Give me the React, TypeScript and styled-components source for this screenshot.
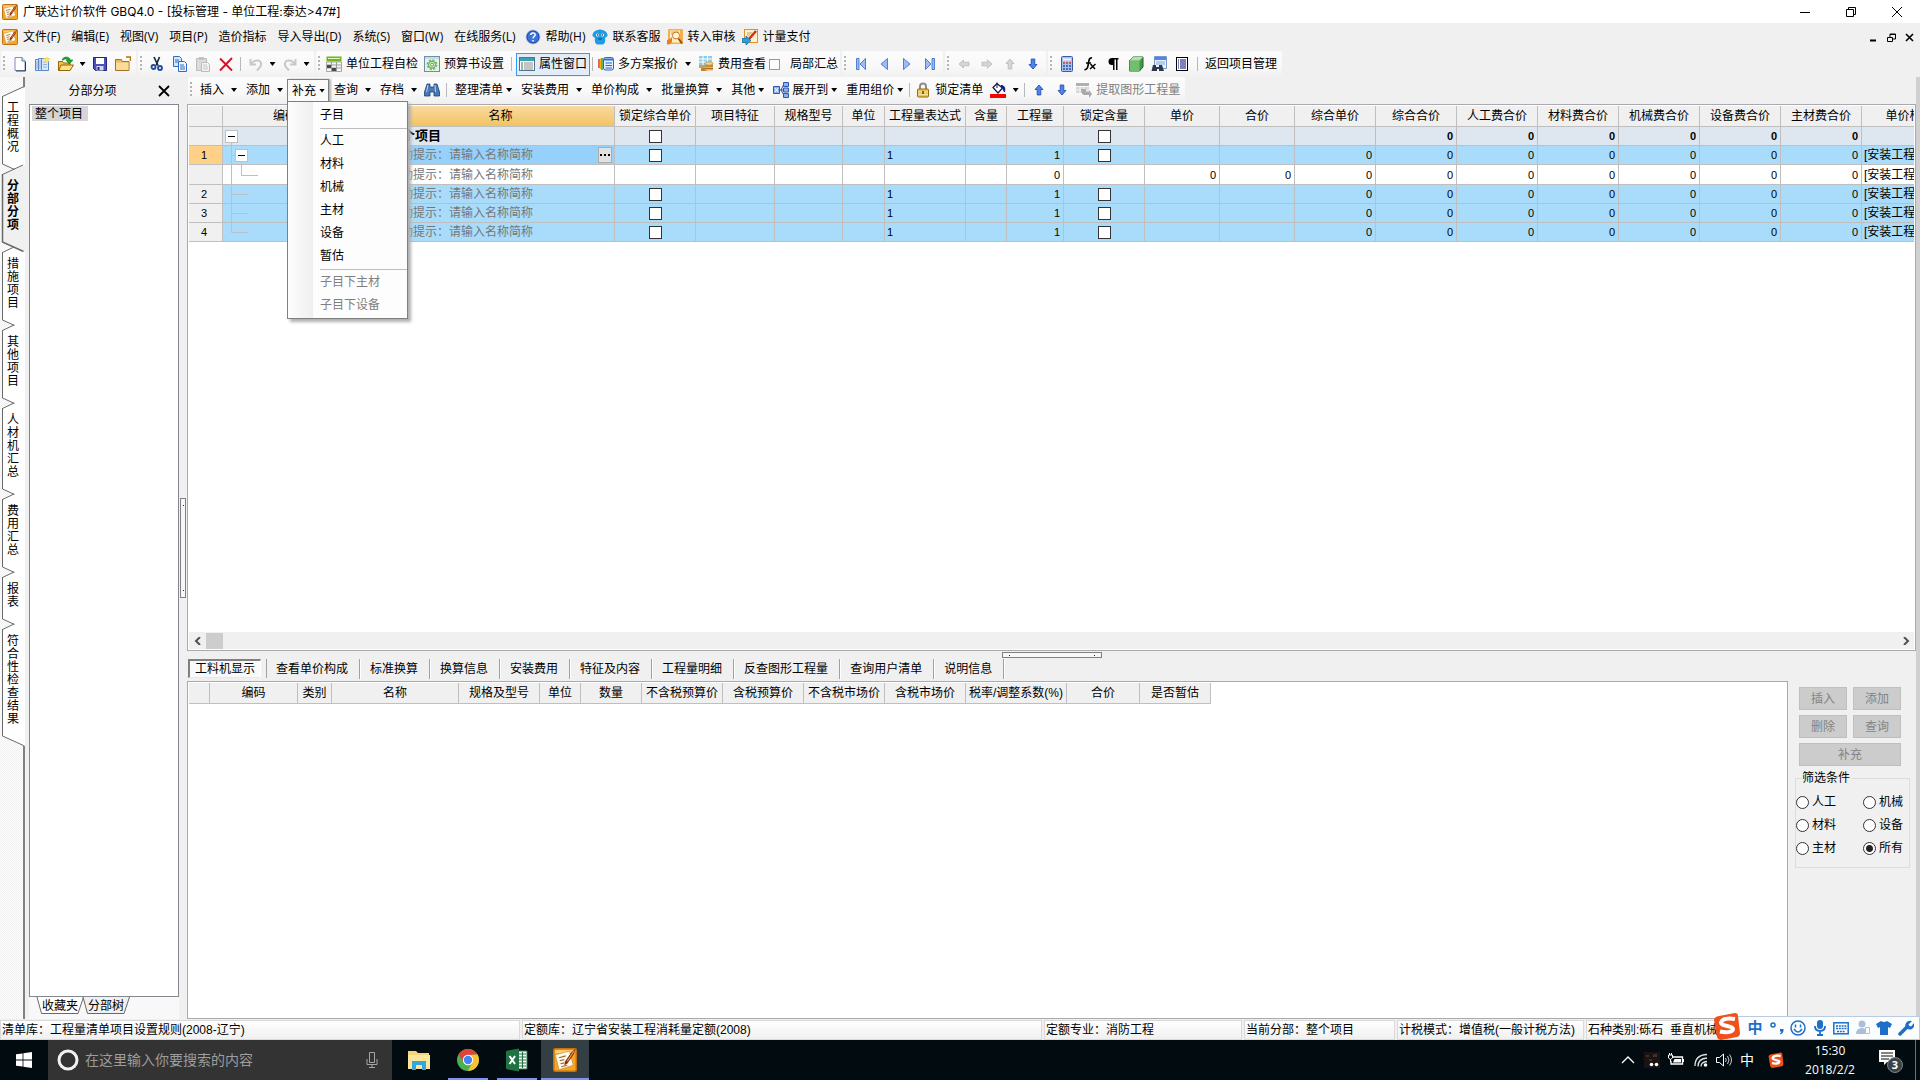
import React from "react";
import styled, { createGlobalStyle, css } from "styled-components";

const UI_FONT = '"Open Sans", "Noto Sans CJK SC", sans-serif';
const GRID_FONT = '"Liberation Sans", "Noto Sans CJK SC", sans-serif';

const GlobalStyle = createGlobalStyle`
  * { box-sizing: border-box; }
  html, body { margin: 0; padding: 0; overflow: hidden; }
  body { font: 12px/16px ${UI_FONT}; color: #000; background: #f0f0f0; }
  button, input { font: inherit; color: inherit; margin: 0; padding: 0; border: 0; background: none; }
  button { white-space: nowrap; }
  svg { display: block; flex: none; }
`;

/* ---------- frame ---------- */

const Window = styled.div`
  display: flex;
  flex-direction: column;
  height: 100vh;
  background: #f0f0f0;
`;

const TitleBar = styled.header`
  display: flex;
  align-items: center;
  height: 23px;
  padding-left: 2px;
  background: #fff;
`;

const Title = styled.h1`
  flex: 1;
  margin: 0 0 0 5px;
  font-family: Inter, "Noto Sans CJK SC", sans-serif;
  font-size: 12px;
  font-weight: 400;
`;

const CaptionButton = styled.button<{ $small?: boolean }>`
  display: flex;
  align-items: center;
  justify-content: center;
  width: ${(p) => (p.$small ? 18 : 46)}px;
  height: 22px;
`;

const MenuBar = styled.nav`
  display: flex;
  align-items: center;
  height: 28px;
  padding: 0 2px;
`;

const MenuItem = styled.button<{ $icon?: boolean }>`
  display: flex;
  align-items: center;
  gap: 5px;
  height: 22px;
  padding: 0 ${(p) => (p.$icon ? "3px" : "6px 0 5px")};
`;

const Spacer = styled.div`
  flex: 1;
`;

const ToolbarRow = styled.div<{ $inner?: boolean }>`
  display: flex;
  flex: none;
  gap: 2px;
  height: ${(p) => (p.$inner ? 27 : 26)}px;
  padding-left: 1px;
`;

const ToolbarSection = styled.div`
  display: flex;
  align-items: center;
  height: 26px;
  padding: 0 2px 0 7px;
  border-radius: 2px;
  background:
    linear-gradient(#b4b4b4, #b4b4b4) 2px 5px / 2px 2px no-repeat,
    linear-gradient(#b4b4b4, #b4b4b4) 2px 9px / 2px 2px no-repeat,
    linear-gradient(#b4b4b4, #b4b4b4) 2px 13px / 2px 2px no-repeat,
    linear-gradient(#b4b4b4, #b4b4b4) 2px 17px / 2px 2px no-repeat,
    linear-gradient(#fcfcfc, #f8f8f8 60%, #f0f0f0);
`;

const IconButton = styled.button<{ $w?: number }>`
  display: flex;
  align-items: center;
  justify-content: center;
  width: ${(p) => p.$w ?? 23}px;
  height: 23px;
`;

const TextButton = styled.button<{ $active?: boolean; $muted?: boolean }>`
  display: flex;
  align-items: center;
  gap: 4px;
  height: 23px;
  padding: 0 2px;
  border: 1px solid ${(p) => (p.$active ? "#3399ff" : "transparent")};
  background: ${(p) => (p.$active ? "#e2edf9" : "none")};
  color: ${(p) => (p.$muted ? "#808080" : "#000")};
`;

const SplitButton = styled.button<{ $tight?: boolean; $open?: boolean }>`
  display: flex;
  align-items: center;
  gap: ${(p) => (p.$tight ? 3 : 7)}px;
  height: 23px;
  padding: 0 4px 0 5px;
  ${(p) =>
    p.$open &&
    css`
      padding: 0 3px 0 4px;
      border: 1px solid #808080;
      border-bottom: 0;
      background: #fafafa;
      box-shadow: 2px 0 2px #b0b0b0;
    `}
`;

const Caret = styled.i`
  width: 6px;
  height: 4px;
  background: currentColor;
  clip-path: polygon(0 0, 100% 0, 50% 100%);
`;

const Separator = styled.i<{ $gap?: number }>`
  width: 1px;
  height: 14px;
  margin: 0 ${(p) => p.$gap ?? 3}px;
  background: #b8b8b8;
`;

const CheckLabel = styled.label`
  display: flex;
  align-items: center;
  gap: 10px;
`;

const ToolCheck = styled.input`
  appearance: none;
  width: 11px;
  height: 11px;
  border: 1px solid #9a9a9a;
  background: #fdfdfd;
`;

/* ---------- body ---------- */

const Body = styled.div`
  display: flex;
  flex: 1;
  min-height: 0;
  border-right: 4px solid #d0d0d0;
`;

const PageTabs = styled.nav`
  display: flex;
  flex: none;
  flex-direction: column;
  width: 25px;
  padding-top: 19px;
  border-right: 2px solid #808080;
  background: repeating-conic-gradient(#f2f2f2 0 25%, #fcfcfc 0 50%) 0 0 / 2px 2px;
`;

const PageTab = styled.button<{ $active?: boolean }>`
  display: grid;
  width: 25px;
  font-family: ${GRID_FONT};
  font-weight: ${(p) => (p.$active ? 700 : 400)};
  z-index: ${(p) => (p.$active ? 1 : 0)};
  > * { grid-area: 1 / 1; }
`;

const PageTabText = styled.span`
  width: 13px;
  margin: 6px 0 20px 7px;
  line-height: 13px;
  white-space: normal;
  word-break: break-all;
  text-align: left;
`;

const TreePane = styled.aside`
  display: flex;
  flex: none;
  flex-direction: column;
  width: 154px;
  padding-left: 4px;
`;

const PaneHead = styled.div`
  display: flex;
  align-items: center;
  height: 27px;
  padding-right: 7px;
`;

const PaneTitle = styled.h2`
  flex: 1;
  margin: 0;
  text-align: center;
  font-size: 12px;
  font-weight: 400;
`;

const TreeBox = styled.div`
  flex: 1;
  padding: 1px 2px;
  border: 1px solid #828790;
  background: #fff;
`;

const TreeItem = styled.button`
  height: 15px;
  padding: 0 5px 0 3px;
  line-height: 15px;
  background: #d6d6d6;
`;

const TreeTabs = styled.div`
  display: flex;
  height: 22px;
  padding-left: 8px;
  background: #f8f8f8;
`;

const TreeTab = styled.button`
  display: grid;
  width: 46px;
  height: 18px;
  line-height: 18px;
  font-family: ${GRID_FONT};
  > * { grid-area: 1 / 1; }
`;

const Splitter = styled.div<{ $row?: boolean }>`
  display: flex;
  flex: none;
  align-items: center;
  justify-content: center;
  width: ${(p) => (p.$row ? "auto" : "8px")};
  height: ${(p) => (p.$row ? "8px" : "auto")};
`;

const SplitHandle = styled.i<{ $row?: boolean }>`
  width: ${(p) => (p.$row ? 100 : 6)}px;
  height: ${(p) => (p.$row ? 6 : 100)}px;
  border: 1px solid #808080;
  background:
    linear-gradient(#1a1a8c, #1a1a8c) ${(p) => (p.$row ? "6px 2px" : "2px 6px")} / 1px 1px no-repeat,
    linear-gradient(#1a1a8c, #1a1a8c) ${(p) => (p.$row ? "91px 2px" : "2px 91px")} / 1px 1px no-repeat,
    #f7f7f7;
`;

const MainPane = styled.main`
  display: flex;
  flex: 1;
  flex-direction: column;
  min-width: 0;
`;

const GridBox = styled.section`
  display: flex;
  flex: 1;
  flex-direction: column;
  min-height: 0;
  padding: 1px;
  border: 1px solid #a9a9af;
  background: #fff;
`;

const GridScroll = styled.div`
  flex: 1;
  overflow: hidden;
`;

const Table = styled.table<{ $width: number }>`
  width: ${(p) => p.$width}px;
  border-collapse: separate;
  border-spacing: 0;
  table-layout: fixed;
  font-family: ${GRID_FONT};
`;

const HeadCell = styled.th<{ $hot?: boolean }>`
  height: 21px;
  padding: 0;
  border: solid #bfbfbf;
  border-width: 0 1px 1px 0;
  font-weight: 400;
  line-height: 16px;
  overflow: hidden;
  white-space: nowrap;
  background: ${(p) => (p.$hot ? "linear-gradient(#fad9a3, #f2c45f)" : "#f0f0f0")};
`;

const rowTint = { sum: "#dee6f0", item: "#a9dcfb", plain: "#fff" };
type Tint = keyof typeof rowTint;

const Row = styled.tr<{ $tint: Tint }>`
  height: ${(p) => (p.$tint === "plain" ? 20 : 19)}px;
  background: ${(p) => rowTint[p.$tint]};
  font-weight: ${(p) => (p.$tint === "sum" ? 700 : 400)};
`;

const Cell = styled.td<{ $align?: string; $bg?: string; $hint?: boolean }>`
  padding: 0 2px;
  border: solid #bfbfbf;
  border-width: 0 1px 1px 0;
  line-height: 16px;
  text-align: ${(p) => p.$align ?? "left"};
  background: ${(p) => p.$bg ?? "none"};
  color: ${(p) => (p.$hint ? "#777" : "#000")};
  overflow: hidden;
  white-space: nowrap;
`;

const NumberCell = styled(Cell)`
  padding-right: 3px;
  font-size: 11px;
`;

const RowNumber = styled.th<{ $current?: boolean }>`
  padding: 0 3px 0 0;
  border: solid #bfbfbf;
  border-width: 0 1px 1px 0;
  font-size: 11px;
  font-weight: 400;
  line-height: 16px;
  background: ${(p) => (p.$current ? "#ffd187" : "#f0f0f0")};
`;

const GridCheck = styled.input`
  display: block;
  appearance: none;
  width: 13px;
  height: 13px;
  margin: 0 auto;
  border: 1px solid #333;
  background: #fff;
`;

const NameLine = styled.div`
  display: flex;
  align-items: center;
  justify-content: space-between;
`;

const RootName = styled.span`
  font-size: 13px;
`;

const EllipsisButton = styled.button`
  display: flex;
  align-items: center;
  justify-content: center;
  width: 14px;
  height: 16px;
  border: 1px solid #adadad;
  background: #e1e1e1;
`;

const TreeCell = styled.td`
  padding: 0 0 0 2px;
  border: solid #bfbfbf;
  border-width: 0 1px 1px 0;
`;

const TreeLine = styled.div`
  display: flex;
  align-items: center;
  height: 18px;
`;

const Toggle = styled.button`
  display: flex;
  align-items: center;
  justify-content: center;
  width: 13px;
  height: 13px;
  border: 1px solid #bfbfbf;
  background: #fff;
`;

const ScrollBar = styled.div`
  display: flex;
  align-items: center;
  height: 17px;
  background: #f0f0f0;
`;

const ScrollArrow = styled.button`
  display: flex;
  align-items: center;
  justify-content: center;
  width: 17px;
  height: 17px;
`;

const ScrollThumb = styled.i`
  width: 17px;
  height: 16px;
  background: #cdcdcd;
`;

const DetailTabs = styled.div`
  display: flex;
  flex: none;
  height: 22px;
  padding-left: 1px;
  font-family: ${GRID_FONT};
`;

const DetailTab = styled.button<{ $active?: boolean }>`
  height: 20px;
  padding: 0 11px 0 10px;
  border-right: 1px solid #a0a0a0;
  box-shadow: 1px 0 #fff;
  ${(p) =>
    p.$active &&
    css`
      height: 19px;
      margin-right: 5px;
      padding: 0 5px;
      border: 1px solid #808080;
      border-width: 2px 1px 1px 2px;
      border-right-color: #fff;
      border-bottom-color: #e8e8e8;
      background: #f9f9f9;
      box-shadow: 5px 0 #f0f0f0, 6px 0 #a0a0a0;
    `}
`;

const Lower = styled.section`
  display: flex;
  flex: none;
  height: 338px;
`;

const LowerGrid = styled.div`
  flex: 1;
  padding: 1px;
  border: 1px solid #a9a9af;
  background: #fff;
`;

const ActionPane = styled.div`
  display: flex;
  flex: none;
  flex-direction: column;
  width: 128px;
  padding: 6px 6px 0 7px;
  font-family: ${GRID_FONT};
`;

const ActionGrid = styled.div`
  display: grid;
  grid-template-columns: 48px 48px;
  gap: 5px 6px;
  margin-left: 4px;
`;

const ActionButton = styled.button<{ $wide?: boolean }>`
  grid-column: ${(p) => (p.$wide ? "span 2" : "auto")};
  height: 23px;
  border: 1px solid #bfbfbf;
  background: #ccc;
  color: #838383;
`;

const FilterBox = styled.fieldset`
  display: grid;
  grid-template-columns: 67px 1fr;
  row-gap: 7px;
  min-width: 0;
  margin: 5px 0 0;
  padding: 9px 0 11px;
  border: 1px solid #dcdcdc;
`;

const FilterLegend = styled.legend`
  margin-left: 5px;
  padding: 0 1px;
  line-height: 14px;
`;

const RadioLabel = styled.label`
  display: flex;
  align-items: center;
  gap: 3px;
`;

const Radio = styled.input`
  appearance: none;
  width: 13px;
  height: 13px;
  border: 1px solid #333;
  border-radius: 50%;
  background: #fff;
  &:checked { background: radial-gradient(circle, #222 3px, #fff 4px); }
`;

/* ---------- drop-down ---------- */

const MenuAnchor = styled.div`
  position: relative;
`;

const Popup = styled.div`
  position: absolute;
  z-index: 5;
  top: 22px;
  left: 0;
  display: flex;
  flex-direction: column;
  width: 121px;
  padding: 2px 0 1px;
  border: 1px solid #808080;
  background: linear-gradient(90deg, #fdfdfd, #efefef 25px, #fdfdfd 25px);
  box-shadow: 3px 3px 3px #b0b0b0;
`;

const PopupItem = styled.button<{ $muted?: boolean }>`
  height: 23px;
  padding-left: 32px;
  text-align: left;
  color: ${(p) => (p.$muted ? "#808080" : "#000")};
`;

const PopupRule = styled.hr`
  width: 87px;
  height: 1px;
  margin: 1px 0 1px auto;
  border: 0;
  background: #bdbdbd;
`;

/* ---------- status bar and taskbar ---------- */

const StatusBar = styled.footer`
  position: relative;
  display: flex;
  gap: 2px;
  height: 21px;
  padding-top: 1px;
  font-family: ${GRID_FONT};
`;

const StatusPart = styled.div<{ $size: number }>`
  flex: ${(p) => `${p.$size} ${p.$size} ${p.$size}px`};
  min-width: 0;
  padding-left: 1px;
  border: 1px solid #d9d9d9;
  background: linear-gradient(#fff, #f0f0f0);
  line-height: 18px;
  overflow: hidden;
  white-space: pre;
`;

const ImeBar = styled.div`
  position: absolute;
  right: 0;
  bottom: 0;
  display: flex;
  align-items: center;
  justify-content: space-between;
  width: 193px;
  height: 24px;
  padding: 0 4px 0 18px;
  border: 1px solid #b9cbe0;
  background: #fbfdff;
  color: #1e6fc8;
`;

const ImeLogo = styled.div`
  position: absolute;
  left: -15px;
  bottom: -1px;
`;

const ImeButton = styled.button`
  display: flex;
  align-items: center;
  justify-content: center;
  width: 18px;
  height: 22px;
  font-size: 15px;
  font-weight: 700;
`;

const TaskBar = styled.div`
  display: flex;
  flex: none;
  height: 40px;
  background: #010b10;
  color: #fff;
`;

const StartButton = styled.button`
  display: flex;
  align-items: center;
  justify-content: center;
  width: 48px;
`;

const SearchBox = styled.label`
  display: flex;
  align-items: center;
  gap: 6px;
  width: 344px;
  margin-right: 2px;
  padding: 0 12px 0 9px;
  background: #333;
`;

const SearchInput = styled.input`
  flex: 1;
  min-width: 0;
  font-size: 14px;
  line-height: 20px;
  &::placeholder { color: #9d9d9d; opacity: 1; }
`;

const TaskButton = styled.button<{ $running?: boolean; $active?: boolean }>`
  display: flex;
  align-items: center;
  justify-content: center;
  width: ${(p) => (p.$active ? 48 : 49)}px;
  background:
    linear-gradient(#8192f2, #8192f2) center bottom / ${(p) => (p.$active ? "100%" : "40px")} ${(p) => (p.$running ? "2px" : "0")} no-repeat,
    ${(p) => (p.$active ? "#343f43" : "transparent")};
`;

const TrayButton = styled.button<{ $w: number }>`
  display: flex;
  align-items: center;
  justify-content: center;
  width: ${(p) => p.$w}px;
  font-size: 14px;
`;

const Clock = styled.time`
  display: flex;
  flex-direction: column;
  justify-content: center;
  width: 74px;
  text-align: center;
  line-height: 19px;
`;

const ShowDesktop = styled.button`
  width: 5px;
  border-left: 1px solid #6a7073;
`;

/* ---------- icons ---------- */

const I = ({ children, size = 16, box = 16 }: { children: React.ReactNode; size?: number; box?: number }) => (
  <svg width={size} height={size} viewBox={`0 0 ${box} ${box}`} aria-hidden="true">{children}</svg>
);

const AppIcon = ({ size = 16 }: { size?: number }) => (
  <I size={size}>
    <rect x="0.5" y="0.5" width="15" height="15" rx="1" fill="#f6a623" stroke="#c4700c" />
    <path d="M1.500 1.500h13v2h-13z" fill="#ffd37a" />
    <path d="M1.500 4.500 11 2l2.500 9.500L4 14.500z" fill="#fffaf0" stroke="#c98d35" strokeWidth=".5" />
    <path d="M4 6.500 8.500 5.300M4.500 8.500 7.500 7.800M5 10.500l2.500-.6M5.500 12.500l4-1" stroke="#9a6a2c" strokeWidth=".8" />
    <path d="M15 .5 14 4 9.500 10.500 7.500 11.500 8 9 12.500 2.500z" fill="#8a2f0a" />
    <path d="M14 2 9.500 8.800" stroke="#f0a050" strokeWidth=".7" />
  </I>
);
const NewIcon = () => (
  <I><path d="M3 1.500h7L13 5v9.500H3z" fill="#fff" stroke="#7b8fb4" /><path d="M10 1.500V5h3" fill="#dfe8f8" stroke="#5b6f92" /><path d="M13.500 5.500V15H4" stroke="#2c3d5c" fill="none" /></I>
);
const BooksIcon = () => (
  <I><path d="M.5 3.500h3v11h-3zM3.500 2.500h3v12h-3zM6.500 2.500h7v12h-7z" fill="#dbe8fb" stroke="#5b86c9" /><path d="M8 6h4M8 8.500h4M8 11h4M2 5v8M5 4v9" fill="none" stroke="#8fb0e0" /><path d="m12 0 1 2.500 3-.5-2 2 2 2-3-.5-1 2.500-1-2.500-3 .5 2-2-2-2 3 .5z" fill="#ffe45c" /></I>
);
const OpenIcon = () => (
  <I><path d="M.5 5.500h4l1 1.500H12v7.500H.5z" fill="#f4c244" stroke="#93650c" /><path d="M3 9h12.500L12 14.500H.8z" fill="#ffe08a" stroke="#93650c" /><path d="M4 4C5.500 0 11 0 12.500 4H15l-3.700 4L8 4h2C9 2.500 6.500 2.500 5.500 4z" fill="#20a52a" stroke="#0b6d14" strokeWidth=".5" /></I>
);
const SaveIcon = () => (
  <I><path d="M1.500 1.500h13v13h-11l-2-2z" fill="#4b4fc4" stroke="#23256f" /><path d="M4 2h8v6H4z" fill="#fff" /><path d="M4.500 10h7v4.500h-7z" fill="#d5d8e8" /><path d="M5.500 11h2v3h-2z" fill="#23256f" /></I>
);
const FolderIcon = () => (
  <I><path d="M.5 3.500h6l1 2h6.500v9H.5z" fill="#e9b95a" stroke="#a0712a" /><path d="M1 6.500h12.500v7.500H1z" fill="#fbdc97" /><path d="M11 1h4.500v4" stroke="#b3740c" fill="none" strokeWidth="1.500" /></I>
);
const CutIcon = () => (
  <I><path d="M5 1 9 9.500M10.500 1 7 9.500" stroke="#1c2a44" strokeWidth="1.700" /><circle cx="4.500" cy="11" r="2" fill="none" stroke="#1f4a98" strokeWidth="1.800" /><circle cx="11" cy="12" r="2" fill="none" stroke="#1f4a98" strokeWidth="1.800" /></I>
);
const CopyIcon = () => (
  <I><path d="M1.500.5h6l2 2v8h-8z" fill="#d7e7fb" stroke="#2e6cc0" /><path d="M6.500 5.500h6l2 2v8h-8z" fill="#eef5fe" stroke="#2e6cc0" /><path d="M3 4h4M3 6h3M8 9h4M8 11h5M8 13h5" stroke="#2e6cc0" /></I>
);
const PasteIcon = () => (
  <I><path d="M1.500 2.500h10v12h-10z" fill="#dcdcdc" stroke="#bcbcbc" /><path d="M4 1h5v3H4z" fill="#c2c2c2" /><path d="M6.500 6.500h6l2 2v7h-8z" fill="#f4f4f4" stroke="#bcbcbc" /><path d="M8 9h4M8 11h5M8 13h5" stroke="#c8c8c8" /></I>
);
const DeleteIcon = () => (
  <I><path d="M2 2.500 14 14.500M14 2 2 14.500" stroke="#d8102c" strokeWidth="1.900" /></I>
);
const UndoIcon = ({ flip }: { flip?: boolean }) => (
  <I><g transform={flip ? "matrix(-1 0 0 1 16 0)" : undefined}><path d="M2.500 3v5.500H8" fill="none" stroke="#c8c8c8" strokeWidth="2" /><path d="M3 8C7 2.500 14 4 13 9c-.4 2.500-2.500 3.500-4 5.500" fill="none" stroke="#c8c8c8" strokeWidth="2" /></g></I>
);
const CheckSheetIcon = () => (
  <I><path d="M.5.5h15v5H.5z" fill="#6fb51c" /><path d="M2 2.500h12" stroke="#e9f7c9" /><path d="M.5 6h15v9.500H.5z" fill="#f6f6f6" stroke="#a8a8a8" /><path d="M1 9h14M1 12h14M5.500 6v9M10.500 6v9" stroke="#9b9b9b" /><path d="M1 9h4v3H1zM6 12h4v3H6z" fill="#4a4a4a" /></I>
);
const GearSheetIcon = () => (
  <I><rect x=".5" y=".5" width="15" height="15" fill="#e6f3e6" stroke="#6c8fa8" /><path d="M1 2h14" stroke="#a9c8dd" /><circle cx="8" cy="8.700" r="4.500" fill="none" stroke="#7cbc72" strokeWidth="2" strokeDasharray="2.200 1.300" /><circle cx="8" cy="8.700" r="3.500" fill="#d4ecd0" stroke="#5aa552" /><circle cx="8" cy="8.700" r="1.500" fill="#fff" stroke="#5aa552" /></I>
);
const PropsIcon = () => (
  <I><rect x=".5" y="1.500" width="15" height="13" fill="#fff" stroke="#50748c" /><path d="M1 2h14v3H1z" fill="#3c9fb4" /><path d="M2 7h2M2 9h2M2 11h2M2 13h2" stroke="#2d7a3e" /><path d="M5 7h9M5 9h9M5 11h9M5 13h9" stroke="#8a8a8a" /></I>
);
const PlansIcon = () => (
  <I><path d="M1 3v9" stroke="#d32f2f" strokeWidth="1.500" /><path d="M2.500 2.500v10.500" stroke="#f4b400" strokeWidth="1.500" /><path d="M4 2v12" stroke="#2e9e3a" strokeWidth="1.500" /><rect x="5.500" y="1.500" width="10" height="12.500" rx="2" fill="#e5effd" stroke="#2a62c8" /><path d="M6 2.500h9v2H6z" fill="#2f6fdc" /><path d="M7.500 7H14M7.500 9.500H14M7.500 12H14" stroke="#2a62c8" /></I>
);
const FeeIcon = () => (
  <I><path d="M1 0h13v9H1z" fill="#8fcbe8" /><path d="M1 3h13M1 6h13M5 0v9M9.500 0v9" stroke="#fff" /><path d="M1 9h6v3H1z" fill="#d69b45" /><path d="M3 12h6v3H3z" fill="#b98236" /><path d="M7 7.500h8v7H7z" fill="#e9b25a" /><path d="M7 10h8M7 12.500h8" stroke="#a46d20" /><ellipse cx="11" cy="7.500" rx="4" ry="1.800" fill="#f8d28a" stroke="#a46d20" strokeWidth=".6" /></I>
);
const NavIcon = ({ flip, bar }: { flip?: boolean; bar?: boolean }) => (
  <I><g transform={flip ? "matrix(-1 0 0 1 16 0)" : undefined} fill="#9dbcf4" stroke="#3565c8" strokeWidth=".8">{bar && <path d="M3.500 2.500H6v11H3.500z" />}<path d={bar ? "M12.500 2.500v11L7 8z" : "M11.500 2.500v11L5 8z"} /></g></I>
);
const ArrowIcon = ({ turn, on }: { turn: number; on?: boolean }) => (
  <I><path transform={`rotate(${turn} 8 8)`} d="M8 3 12 7.500H9.800V13H6.200V7.500H4z" fill={on ? "#4d83ea" : "#d6d6d6"} stroke={on ? "#1d48a8" : "#b8b8b8"} strokeWidth=".8" /></I>
);
const CalcIcon = () => (
  <I><rect x="2.500" y=".5" width="11" height="15" rx="1" fill="#a8c2f0" stroke="#3c5ca0" /><path d="M4 2.500h8v2H4z" fill="#eaf3ff" /><path d="M4 7h2M7 7h2M10 7h2" stroke="#d63a2a" strokeWidth="1.600" /><path d="M4 10h2M7 10h2M10 10h2M4 13h2M7 13h2M10 13h2" stroke="#2c4c98" strokeWidth="1.600" /></I>
);
const FxIcon = () => (
  <I><path d="M10 2C7.500 1.500 7 3.500 6.500 7s-1 7-4 6.500M4 7h5" fill="none" stroke="#000" strokeWidth="1.700" /><path d="M8.500 8 13 13M13.500 8 8 13" stroke="#000" strokeWidth="1.500" /></I>
);
const PilcrowIcon = () => (
  <I><path d="M13.500 2H7a3.500 3.500 0 0 0 0 7h1v5h1.500V3.500H11V14h1.500V3.500h1z" fill="#000" /></I>
);
const CubeIcon = () => (
  <I><path d="M1.500 4.500 5 1h10v10l-3.500 4h-10z" fill="#47974b" stroke="#1e5c25" /><path d="M1.500 4.500h10V15h-10z" fill="#73bd70" /><path d="M1.500 4.500 5 1h10l-3.500 3.500z" fill="#b3e0ac" /></I>
);
const FindSheetIcon = () => (
  <I><path d="M3.500.5h12v12h-12z" fill="#e7f0ff" stroke="#7796c9" /><path d="M4 1h11v3H4z" fill="#4f86e6" /><path d="M5 6h9M5 8h9" stroke="#8aa5d6" /><path d="M2 9h3v2h3V9h3l2 6H8v-2H6v2H.5z" fill="#2d3848" /></I>
);
const ListIcon = () => (
  <I><rect x="2.500" y="1.500" width="11" height="13" fill="#fff" stroke="#000" /><path d="M4 4h1M6 4h6M4 6h1M6 6h6M4 8h1M6 8h6M4 10h1M6 10h6M4 12h1M6 12h6" stroke="#00007c" strokeWidth="1.200" /></I>
);
const BinocularsIcon = () => (
  <I><path d="M3 2h3v3h4V2h3l2.500 8v4H10v-4H6v4H.5v-4z" fill="#4a78b8" stroke="#203f70" strokeWidth=".8" /><path d="M4 3 2.500 10M11 3l.5 7" stroke="#bcd5f5" /></I>
);
const ExpandIcon = () => (
  <I><path d="M5 8h6M8 8l3-6M8 8l3 5.500" stroke="#2b4f8c" fill="none" /><g fill="#8fb2ee" stroke="#2c59b0"><path d="M.5 4.500h6v7h-6zM10.500.5h5v4h-5zM10.500 6h5v4h-5zM10.500 11.500h5v4h-5z" /></g><path d="m2 6 3 4M5 6l-3 4" stroke="#fff" /></I>
);
const LockIcon = () => (
  <I><path d="M5 8V4.500a3 3 0 0 1 6 0V8" fill="none" stroke="#8d8d8d" strokeWidth="2" /><rect x="2.500" y="7" width="11" height="8" rx="1" fill="#eec14a" stroke="#946b14" /><path d="M3 10h10M3 12.500h10" stroke="#fbe6a5" /><path d="M8 9v3" stroke="#5a3f06" strokeWidth="1.500" /></I>
);
const PaintIcon = () => (
  <I><path d="m3 5.500 4-4 5.500 4.500L8 11z" fill="#fff" stroke="#101440" strokeWidth="1.200" /><path d="M7 6V.5" stroke="#101440" /><path d="M11 3.500c3 0 4.500 2 3.500 6.500l-2-4z" fill="#101c8c" stroke="#101c8c" /><path d="M0 12h16v4H0z" fill="#f00" /></I>
);
const ExtractIcon = () => (
  <I><path d="M0 1h13v3H0z" fill="#b0b0b0" /><path d="M0 5h13v6H0z" fill="#d6d6d6" /><path d="M4 5v6M8 5v6M0 8h13" stroke="#f5f5f5" /><path d="M5 7h5v3h3V8l3 4-3 4v-3H8q-3-1-3-6z" fill="#a9a9a9" /></I>
);
const HelpIcon = () => (
  <I><circle cx="8" cy="8" r="7" fill="#3c73d8" stroke="#b9c9e8" /><circle cx="8" cy="8" r="6" fill="none" stroke="#1f4aa6" /><path d="M5.800 6c.2-3 4.600-2.600 4.400 0C10 7.500 8 7.500 8 9.500M8 11v1.600" fill="none" stroke="#fff" strokeWidth="1.500" /></I>
);
const ServiceIcon = () => (
  <I><path d="M3 2q5-3 10 0 3 2 2.500 5L13 9q1 5-2 6.500H5Q2 14 3 9L.5 7Q0 4 3 2z" fill="#1c9be6" /><circle cx="5.500" cy="6" r="1.500" fill="#fff" /><circle cx="10.500" cy="6" r="1.500" fill="#fff" /><circle cx="5.700" cy="6" r=".7" /><circle cx="10.300" cy="6" r=".7" /><path d="M6 9.500q2 1.500 4 0" stroke="#064b7d" fill="none" /></I>
);
const AuditIcon = () => (
  <I><rect x="1" y="0" width="15" height="15" rx="1" fill="#f4b04a" /><path d="M3 1.500h10v12H3z" fill="#ffeec3" /><path d="M4 3h8M4 5h3" stroke="#dba550" /><circle cx="9" cy="6.500" r="3.500" fill="#fff8e6" stroke="#c97516" /><path d="m11.500 9.500 3.500 5" stroke="#a64a08" strokeWidth="2" /><path d="M0 11q3 0 5-3v5q-2 3-5 2.500z" fill="#eb7c1c" /></I>
);
const PayIcon = () => (
  <I><rect x="2.500" y=".5" width="13" height="13" fill="#fff1ce" stroke="#e2921c" /><path d="M5 4h5M5 6h3" stroke="#c99e56" /><path d="m14 2-7 8" stroke="#cf3512" strokeWidth="2.500" /><path d="M0 9.500h4V7l5 4.500L4 16v-2.500H0z" fill="#2b9de0" stroke="#12619a" strokeWidth=".7" /></I>
);
const SogouIcon = ({ size }: { size: number }) => (
  <I size={size} box={28}><path d="M6 4 22 1q3 0 3 3l2 17q0 3-3 4L8 28q-3 0-4-3L1 8q0-3 5-4z" fill="#f0501c" /><path d="M22 7Q10 5 8 10.500c-.5 4 12 3 12 6.500-.5 4-8 3.500-13 2.500" fill="none" stroke="#fff" strokeWidth="4" /></I>
);
const DotsIcon = () => (
  <svg width="10" height="2" aria-hidden="true"><path d="M0 0h2v2H0zM4 0h2v2H4zM8 0h2v2H8z" /></svg>
);

/* ---------- data ---------- */

const menus = ["文件(F)", "编辑(E)", "视图(V)", "项目(P)", "造价指标", "导入导出(D)", "系统(S)", "窗口(W)", "在线服务(L)"];
const iconMenus: [string, React.ReactNode][] = [
  ["帮助(H)", <HelpIcon />],
  ["联系客服", <ServiceIcon />],
  ["转入审核", <AuditIcon />],
  ["计量支付", <PayIcon />],
];
const pageTabs = ["工程概况", "分部分项", "措施项目", "其他项目", "人材机汇总", "费用汇总", "报表", "符合性检查结果"];

const columns: [string, number][] = [
  ["", 34], ["编码", 125], ["类别", 39], ["名称", 228], ["锁定综合单价", 81], ["项目特征", 79], ["规格型号", 68],
  ["单位", 42], ["工程量表达式", 81], ["含量", 41], ["工程量", 57], ["锁定含量", 81], ["单价", 75], ["合价", 75],
  ["综合单价", 81], ["综合合价", 81], ["人工费合价", 81], ["材料费合价", 81], ["机械费合价", 81], ["设备费合价", 81],
  ["主材费合价", 81], ["单价构成", 96],
];
const detailColumns: [string, number][] = [
  ["", 21], ["编码", 88], ["类别", 34], ["名称", 127], ["规格及型号", 81], ["单位", 41], ["数量", 61], ["不含税预算价", 81],
  ["含税预算价", 81], ["不含税市场价", 81], ["含税市场价", 81], ["税率/调整系数(%)", 101], ["合价", 73], ["是否暂估", 71],
];
const detailTabs = ["工料机显示", "查看单价构成", "标准换算", "换算信息", "安装费用", "特征及内容", "工程量明细", "反查图形工程量", "查询用户清单", "说明信息"];
const sum = (cols: [string, number][]) => cols.reduce((n, c) => n + c[1], 0);

type Kind = "root" | "first" | "child" | "mid" | "last";
const rows: { no: string; kind: Kind; tint: Tint }[] = [
  { no: "", kind: "root", tint: "sum" },
  { no: "1", kind: "first", tint: "item" },
  { no: "", kind: "child", tint: "plain" },
  { no: "2", kind: "mid", tint: "item" },
  { no: "3", kind: "mid", tint: "item" },
  { no: "4", kind: "last", tint: "item" },
];
const branch: Record<Kind, string> = {
  root: "",
  first: "M6.500-3V19M6.500 9.500H11",
  child: "M6.500-1V20M16.500-3V9.500H33",
  mid: "M6.500-1V19M6.500 9.500H23",
  last: "M6.500-1V9.500H23",
};

const Minus = () => (
  <svg width="7" height="1"><path d="M0 .5h7" stroke="#000" /></svg>
);

const Cols = ({ cols }: { cols: [string, number][] }) => (
  <colgroup>{cols.map((c, i) => <col key={i} style={{ width: c[1] }} />)}</colgroup>
);

function GridRow({ no, kind, tint }: { no: string; kind: Kind; tint: Tint }) {
  const root = kind === "root";
  const child = kind === "child";
  const check = !child && <GridCheck type="checkbox" aria-label="锁定" />;
  return (
    <Row $tint={tint}>
      <RowNumber scope="row" $current={kind === "first"}>{no}</RowNumber>
      <TreeCell>
        <TreeLine>
          {!root && (
            <svg width={kind === "first" ? 10 : 34} height="18" overflow="visible">
              <path d={branch[kind]} fill="none" stroke="#bfbfbf" />
            </svg>
          )}
          {(root || kind === "first") && <Toggle aria-label="折叠"><Minus /></Toggle>}
        </TreeLine>
      </TreeCell>
      <Cell />
      <Cell $hint={!root} $bg={kind === "first" ? "#95d1fb" : undefined}>
        {root ? <RootName>整个项目</RootName> : (
          <NameLine>
            自动提示：请输入名称简称
            {kind === "first" && <EllipsisButton aria-label="更多"><DotsIcon /></EllipsisButton>}
          </NameLine>
        )}
      </Cell>
      <Cell $align="center">{check}</Cell>
      <Cell /><Cell /><Cell />
      <NumberCell>{!root && !child && "1"}</NumberCell>
      <Cell />
      <NumberCell $align="right">{child ? "0" : !root && "1"}</NumberCell>
      <Cell $align="center">{check}</Cell>
      <NumberCell $align="right">{child && "0"}</NumberCell>
      <NumberCell $align="right">{child && "0"}</NumberCell>
      <NumberCell $align="right">{!root && "0"}</NumberCell>
      {columns.slice(15, 21).map(([name]) => <NumberCell key={name} $align="right">0</NumberCell>)}
      <Cell>{!root && "[安装工程]"}</Cell>
    </Row>
  );
}

function TabShape({ height, first, active }: { height: number; first: boolean; active: boolean }) {
  return (
    <svg width="25" height={height} overflow="visible" aria-hidden="true">
      <path d={`M25-9 2.500.5V${height - 10}L25 ${height}z`} fill={active ? "#f0f0f0" : "#fff"} />
      <path d={first || active ? `M23-9 2.500.5` : `M14-5 2.500.5`} stroke="#696969" fill="none" />
      <path d={`M2.500 0V${height - 10}L23.500 ${height - 0.5}`} stroke="#696969" strokeWidth={active ? 1.5 : 1} fill="none" />
    </svg>
  );
}

const Split = ({ children, tight }: { children: string; tight?: boolean }) => (
  <SplitButton $tight={tight}>{children}<Caret /></SplitButton>
);

export default function App() {
  return (
    <>
      <GlobalStyle />
      <Window>
        <TitleBar>
          <AppIcon />
          <Title>广联达计价软件 GBQ4.0 - [投标管理 - 单位工程:泰达&gt;47#]</Title>
          <CaptionButton aria-label="最小化"><svg width="10" height="10"><path d="M0 5.500h10" stroke="#000" /></svg></CaptionButton>
          <CaptionButton aria-label="还原"><svg width="10" height="10"><path d="M.5 2.500h7v7h-7zM2.500 2.500v-2h7v7h-2" fill="none" stroke="#000" /></svg></CaptionButton>
          <CaptionButton aria-label="关闭"><svg width="10" height="10"><path d="m0 0 10 10M10 0 0 10" stroke="#000" /></svg></CaptionButton>
        </TitleBar>

        <MenuBar>
          <AppIcon />
          {menus.map((m) => <MenuItem key={m}>{m}</MenuItem>)}
          {iconMenus.map(([m, icon]) => <MenuItem key={m} $icon>{icon}{m}</MenuItem>)}
          <Spacer />
          <CaptionButton $small aria-label="最小化文档"><svg width="9" height="9"><path d="M1 7.500h6" stroke="#000" strokeWidth="2" /></svg></CaptionButton>
          <CaptionButton $small aria-label="还原文档"><svg width="9" height="9"><path d="M.5 4.500h5v4h-5zM3 4V1h5.500v5H6M3 1.500h5.500" fill="none" stroke="#000" /></svg></CaptionButton>
          <CaptionButton $small aria-label="关闭文档"><svg width="9" height="9"><path d="m1 1 7 7M8 1 1 8" stroke="#000" strokeWidth="1.600" /></svg></CaptionButton>
        </MenuBar>

        <ToolbarRow>
          <ToolbarSection>
            <IconButton aria-label="新建"><NewIcon /></IconButton>
            <IconButton aria-label="新建项目"><BooksIcon /></IconButton>
            <IconButton aria-label="打开"><OpenIcon /></IconButton>
            <IconButton $w={11} aria-label="最近文件"><Caret /></IconButton>
            <IconButton aria-label="保存"><SaveIcon /></IconButton>
            <IconButton aria-label="关闭文件"><FolderIcon /></IconButton>
          </ToolbarSection>
          <ToolbarSection>
            <IconButton aria-label="剪切"><CutIcon /></IconButton>
            <IconButton aria-label="复制"><CopyIcon /></IconButton>
            <IconButton aria-label="粘贴"><PasteIcon /></IconButton>
            <IconButton aria-label="删除"><DeleteIcon /></IconButton>
            <Separator />
            <IconButton aria-label="撤销"><UndoIcon /></IconButton>
            <IconButton $w={11} aria-label="撤销列表"><Caret /></IconButton>
            <IconButton aria-label="恢复"><UndoIcon flip /></IconButton>
            <IconButton $w={11} aria-label="恢复列表"><Caret /></IconButton>
          </ToolbarSection>
          <ToolbarSection>
            <TextButton><CheckSheetIcon />单位工程自检</TextButton>
            <TextButton><GearSheetIcon />预算书设置</TextButton>
            <Separator $gap={4} />
            <TextButton $active><PropsIcon />属性窗口</TextButton>
            <Separator $gap={2} />
            <TextButton><PlansIcon />多方案报价</TextButton>
            <IconButton $w={14} aria-label="报价选项"><Caret /></IconButton>
            <TextButton><FeeIcon />费用查看</TextButton>
            <CheckLabel><ToolCheck type="checkbox" />局部汇总</CheckLabel>
          </ToolbarSection>
          <ToolbarSection>
            <IconButton aria-label="首条"><NavIcon bar /></IconButton>
            <IconButton aria-label="上一条"><NavIcon /></IconButton>
            <IconButton aria-label="下一条"><NavIcon flip /></IconButton>
            <IconButton aria-label="末条"><NavIcon bar flip /></IconButton>
          </ToolbarSection>
          <ToolbarSection>
            <IconButton aria-label="升级"><ArrowIcon turn={-90} /></IconButton>
            <IconButton aria-label="降级"><ArrowIcon turn={90} /></IconButton>
            <IconButton aria-label="上移"><ArrowIcon turn={0} /></IconButton>
            <IconButton aria-label="下移"><ArrowIcon turn={180} on /></IconButton>
          </ToolbarSection>
          <ToolbarSection>
            <IconButton aria-label="计算器"><CalcIcon /></IconButton>
            <IconButton aria-label="函数"><FxIcon /></IconButton>
            <IconButton aria-label="段落"><PilcrowIcon /></IconButton>
            <IconButton aria-label="图元"><CubeIcon /></IconButton>
            <IconButton aria-label="查找"><FindSheetIcon /></IconButton>
            <IconButton aria-label="列表"><ListIcon /></IconButton>
            <Separator $gap={4} />
            <TextButton>返回项目管理</TextButton>
          </ToolbarSection>
        </ToolbarRow>

        <Body>
          <PageTabs>
            {pageTabs.map((t, i) => (
              <PageTab key={t} $active={i === 1}>
                <TabShape height={t.length * 13 + 26} first={i === 0} active={i === 1} />
                <PageTabText>{t}</PageTabText>
              </PageTab>
            ))}
          </PageTabs>

          <TreePane>
            <PaneHead>
              <PaneTitle>分部分项</PaneTitle>
              <IconButton $w={16} aria-label="关闭面板">
                <svg width="12" height="12"><path d="m1 1 10 10M11 1 1 11" stroke="#000" strokeWidth="1.800" /></svg>
              </IconButton>
            </PaneHead>
            <TreeBox><TreeItem>整个项目</TreeItem></TreeBox>
            <TreeTabs>
              {["收藏夹", "分部树"].map((t, i) => (
                <TreeTab key={t}>
                  <svg width="46" height="18" overflow="visible" aria-hidden="true">
                    <path d="M0 0 4.500 16.500H41L46.500 0" fill={i ? "#f0f0f0" : "#fff"} stroke="#696969" />
                  </svg>
                  <span>{t}</span>
                </TreeTab>
              ))}
            </TreeTabs>
          </TreePane>

          <Splitter><SplitHandle /></Splitter>

          <MainPane>
            <ToolbarRow $inner>
              <ToolbarSection>
                <Split>插入</Split>
                <Split>添加</Split>
                <MenuAnchor>
                  <SplitButton $tight $open aria-haspopup="menu" aria-expanded="true">补充<Caret /></SplitButton>
                  <Popup role="menu">
                    <PopupItem role="menuitem">子目</PopupItem>
                    <PopupRule />
                    {["人工", "材料", "机械", "主材", "设备", "暂估"].map((t) => <PopupItem key={t} role="menuitem">{t}</PopupItem>)}
                    <PopupRule />
                    <PopupItem role="menuitem" $muted>子目下主材</PopupItem>
                    <PopupItem role="menuitem" $muted>子目下设备</PopupItem>
                  </Popup>
                </MenuAnchor>
                <Split>查询</Split>
                <Split>存档</Split>
                <IconButton $w={22} aria-label="查找"><BinocularsIcon /></IconButton>
                <Separator />
                <Split tight>整理清单</Split>
                <Split>安装费用</Split>
                <Split>单价构成</Split>
                <Split>批量换算</Split>
                <Split tight>其他</Split>
                <SplitButton $tight><ExpandIcon />展开到<Caret /></SplitButton>
                <Split tight>重用组价</Split>
                <Separator $gap={2} />
                <TextButton><LockIcon />锁定清单</TextButton>
                <IconButton aria-label="填充颜色"><PaintIcon /></IconButton>
                <IconButton $w={13} aria-label="颜色列表"><Caret /></IconButton>
                <Separator $gap={2} />
                <IconButton aria-label="上移"><ArrowIcon turn={0} on /></IconButton>
                <IconButton aria-label="下移"><ArrowIcon turn={180} on /></IconButton>
                <TextButton $muted><ExtractIcon />提取图形工程量</TextButton>
              </ToolbarSection>
            </ToolbarRow>

            <GridBox>
              <GridScroll>
                <Table $width={sum(columns)}>
                  <Cols cols={columns} />
                  <thead>
                    <tr>{columns.map(([n], i) => <HeadCell key={i} scope="col" $hot={n === "名称"}>{n}</HeadCell>)}</tr>
                  </thead>
                  <tbody>{rows.map((r, i) => <GridRow key={i} {...r} />)}</tbody>
                </Table>
              </GridScroll>
              <ScrollBar>
                <ScrollArrow aria-label="向左滚动"><svg width="8" height="8"><path d="M6 0 2 4l4 4" fill="none" stroke="#505050" strokeWidth="2" /></svg></ScrollArrow>
                <ScrollThumb />
                <Spacer />
                <ScrollArrow aria-label="向右滚动"><svg width="8" height="8"><path d="m2 0 4 4-4 4" fill="none" stroke="#505050" strokeWidth="2" /></svg></ScrollArrow>
              </ScrollBar>
            </GridBox>

            <Splitter $row><SplitHandle $row /></Splitter>

            <DetailTabs role="tablist">
              {detailTabs.map((t, i) => <DetailTab key={t} role="tab" aria-selected={i === 0} $active={i === 0}>{t}</DetailTab>)}
            </DetailTabs>

            <Lower>
              <LowerGrid>
                <Table $width={sum(detailColumns)}>
                  <Cols cols={detailColumns} />
                  <thead>
                    <tr>{detailColumns.map(([n], i) => <HeadCell key={i} scope="col">{n}</HeadCell>)}</tr>
                  </thead>
                </Table>
              </LowerGrid>
              <ActionPane>
                <ActionGrid>
                  {["插入", "添加", "删除", "查询"].map((t) => <ActionButton key={t} disabled>{t}</ActionButton>)}
                  <ActionButton $wide disabled>补充</ActionButton>
                </ActionGrid>
                <FilterBox>
                  <FilterLegend>筛选条件</FilterLegend>
                  {["人工", "机械", "材料", "设备", "主材", "所有"].map((t) => (
                    <RadioLabel key={t}><Radio type="radio" name="filter" defaultChecked={t === "所有"} />{t}</RadioLabel>
                  ))}
                </FilterBox>
              </ActionPane>
            </Lower>
          </MainPane>
        </Body>

        <StatusBar>
          <StatusPart $size={520}>清单库：工程量清单项目设置规则(2008-辽宁)</StatusPart>
          <StatusPart $size={520}>定额库：辽宁省安装工程消耗量定额(2008)</StatusPart>
          <StatusPart $size={198}>定额专业：消防工程</StatusPart>
          <StatusPart $size={151}>当前分部：整个项目</StatusPart>
          <StatusPart $size={187}>计税模式：增值税(一般计税方法)</StatusPart>
          <StatusPart $size={334}>石种类别:砾石  垂直机械</StatusPart>
          <ImeBar>
            <ImeLogo><SogouIcon size={28} /></ImeLogo>
            <ImeButton>中</ImeButton>
            <ImeButton aria-label="标点"><I><circle cx="4" cy="5" r="2" fill="none" stroke="#1e6fc8" strokeWidth="1.500" /><path d="M11 9h3.500q.5 4-3 5.500l-.5-1q1.500-1 1.200-2H11z" fill="#1e6fc8" /></I></ImeButton>
            <ImeButton aria-label="表情"><I><circle cx="8" cy="8" r="7" fill="none" stroke="#1e6fc8" strokeWidth="1.500" /><path d="M5.500 4.500v3M10.500 4.500v3M4 9q4 6 8 0" fill="none" stroke="#1e6fc8" strokeWidth="1.500" /></I></ImeButton>
            <ImeButton aria-label="语音"><I><rect x="5" y="0" width="6" height="9" rx="3" fill="#1e6fc8" /><path d="M3 6q0 5 5 5t5-5M8 11v4M5 15h6" fill="none" stroke="#1e6fc8" strokeWidth="1.800" /></I></ImeButton>
            <ImeButton aria-label="键盘"><I><rect x=".8" y="2.800" width="14.400" height="11" fill="none" stroke="#1e6fc8" strokeWidth="1.500" /><path d="M3 6h10.500M3 8.500h10.500M4 11.500h8" stroke="#1e6fc8" strokeWidth="1.500" strokeDasharray="2 .8" /></I></ImeButton>
            <ImeButton aria-label="账户"><I><circle cx="7" cy="4" r="3.500" fill="#aabfdc" /><path d="M1 14q0-6 6-6 2 0 3 1v5z" fill="#aabfdc" /><path d="M10.500 7.500h4v6h-4z" fill="#fff" stroke="#aabfdc" /></I></ImeButton>
            <ImeButton aria-label="皮肤"><I><path d="M5 1q3 2 6 0l5 3-2 4-2-1v8H4V7L2 8 0 4z" fill="#1e6fc8" /></I></ImeButton>
            <ImeButton aria-label="工具"><I><path d="M2 14 9 7" stroke="#1e6fc8" strokeWidth="3.500" strokeLinecap="round" /><path d="M14 1 10.500 4.500l1 1.500 1.500.5L16 3q1 5-3 6.500-5 .5-6-3.500Q8 0 14 1z" fill="#1e6fc8" /></I></ImeButton>
          </ImeBar>
        </StatusBar>

        <TaskBar>
          <StartButton aria-label="开始"><I><path d="M0 2.300 6.600 1.400V7.600H0zM7.400 1.300 16 0v7.600H7.400zM0 8.400h6.600v6.200L0 13.700zM7.400 8.400H16V16l-8.600-1.200z" fill="#fff" /></I></StartButton>
          <SearchBox>
            <svg width="22" height="26" viewBox="0 0 22 26"><circle cx="11" cy="13" r="9" fill="none" stroke="#f2f2f2" strokeWidth="3" /></svg>
            <SearchInput placeholder="在这里输入你要搜索的内容" aria-label="搜索" />
            <I><path d="M5.500.5h5v10h-5zM3 7v5.500h10V7M8 13v3M5 15.500h6" fill="none" stroke="#a5a5a5" /></I>
          </SearchBox>
          <TaskButton aria-label="文件资源管理器"><I size={24} box={24}><path d="M1 3h8l2 2h11v15H1z" fill="#f6d57a" /><path d="M1 7h22v14H1z" fill="#fde59a" /><path d="M5 22v-9h14v9h-4v-5H9v5z" fill="#35a5e0" /></I></TaskButton>
          <TaskButton $running aria-label="Chrome">
            <I size={24} box={24}><circle cx="12" cy="12" r="11" fill="#4caf50" /><path d="M2.500 6.500A11 11 0 0 1 21.500 6.500L12 7 7.700 14.500z" fill="#e0433a" /><path d="M21.500 6.500A11 11 0 0 1 12 23l4.300-8.500L12 7z" fill="#fbc02d" /><circle cx="12" cy="12" r="5.200" fill="#fff" /><circle cx="12" cy="12" r="4.200" fill="#4285f4" /></I>
          </TaskButton>
          <TaskButton $running aria-label="Excel">
            <I size={24} box={24}><path d="M12 3h10v18H12z" fill="#fff" stroke="#207245" /><path d="M13 6h8M13 9h8M13 12h8M13 15h8M13 18h8M17.500 4v16" stroke="#207245" strokeWidth="1.200" /><path d="M1 3 14 .5v23L1 21z" fill="#207245" /><path d="m4.500 8 5.500 8M10 8l-5.500 8" stroke="#fff" strokeWidth="2" /></I>
          </TaskButton>
          <TaskButton $running $active aria-label="广联达计价软件"><AppIcon size={24} /></TaskButton>
          <Spacer />
          <TrayButton $w={24} aria-label="显示隐藏的图标"><I><path d="m2 11 6-6 6 6" fill="none" stroke="#fff" strokeWidth="1.300" /></I></TrayButton>
          <TrayButton $w={24} aria-label="后台程序"><I><rect width="16" height="16" fill="#1b1311" /><path d="M2 3h3v2H2zM9 2h4v3H9zM5 7h3v2H5z" fill="#40302b" /><circle cx="7.500" cy="12.500" r="1.800" fill="#fff" /><circle cx="12.500" cy="12.500" r="1.800" fill="#fff" /></I></TrayButton>
          <TrayButton $w={24} aria-label="电池"><I><path d="M5 5h9.500v7H3V9M15.500 7v3" fill="none" stroke="#fff" strokeWidth="1.300" /><path d="M6.500 7H13v3.500H5z" fill="#fff" /><path d="M.5 3h4v3l-2 1.500L.5 6zM1.500 1v2M3.500 1v2M2.500 7v3" stroke="#fff" fill="none" /></I></TrayButton>
          <TrayButton $w={25} aria-label="网络"><I><path d="M2 14Q2 3 14 2.500M5 14.500Q5 6.500 14 6M8 14.500Q8 10 14 9.500" fill="none" stroke="#e0e0e0" strokeWidth="1.300" /><circle cx="12.500" cy="13" r="1.800" fill="#fff" /></I></TrayButton>
          <TrayButton $w={22} aria-label="音量"><I><path d="M.5 5.500h3L7.500 2v12l-4-3.500h-3z" fill="none" stroke="#fff" /><path d="M9.500 6q1.500 2 0 4M11.500 4q3 4 0 8M13.500 2.500q4 5.500 0 11" fill="none" stroke="#ccc" /></I></TrayButton>
          <TrayButton $w={24}>中</TrayButton>
          <TrayButton $w={34} aria-label="搜狗输入法"><SogouIcon size={16} /></TrayButton>
          <Clock><span>15:30</span><span>2018/2/2</span></Clock>
          <TrayButton $w={48} aria-label="通知">
            <svg width="26" height="26" viewBox="0 0 26 26">
              <path d="M1 3h16v12H9l-3 3v-3H1z" fill="#fff" /><path d="M3 6h12M3 9h12M3 12h8" stroke="#010b10" />
              <circle cx="17" cy="18" r="7.500" fill="#3c4346" stroke="#7e8588" />
              <text x="17" y="22" textAnchor="middle" fontSize="11" fontWeight="700" fill="#fff">3</text>
            </svg>
          </TrayButton>
          <ShowDesktop aria-label="显示桌面" />
        </TaskBar>
      </Window>
    </>
  );
}
